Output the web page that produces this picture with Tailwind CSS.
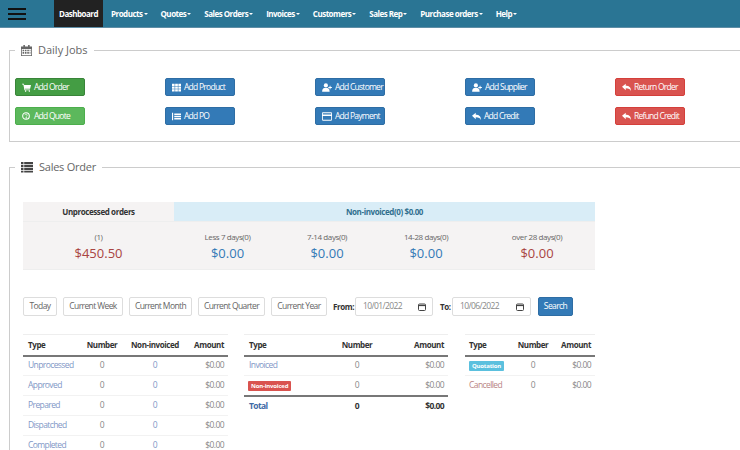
<!DOCTYPE html>
<html lang="en">
<head>
  <meta charset="UTF-8" />
  <title>Dashboard</title>
  <script src="https://cdn.jsdelivr.net/npm/@tailwindcss/browser@4"></script>
</head>
<body class="bg-white font-['Open_Sans',sans-serif] text-[8px] tracking-[-0.4px] text-[#555] w-[740px] h-[450px] overflow-hidden">
  <!-- Navbar -->
  <nav class="h-[28px] bg-[#2a7594] border-b border-[#5f8ea6] flex items-stretch text-white font-bold text-[8px] tracking-[-0.5px]">
    <div class="w-[54px] flex items-center pl-[8px]">
      <div class="w-[18px] flex flex-col gap-[3px]">
        <div class="h-[2px] bg-[#111]"></div>
        <div class="h-[2px] bg-[#111]"></div>
        <div class="h-[2px] bg-[#111]"></div>
      </div>
    </div>
    <a class="w-[49px] bg-[#222] flex items-center justify-center">Dashboard</a>
    <a class="ml-[8px] flex items-center">Products<span class="ml-[1px] border-x-[2px] border-t-[2px] border-x-transparent border-t-white"></span></a>
    <a class="ml-[13px] flex items-center">Quotes<span class="ml-[1px] border-x-[2px] border-t-[2px] border-x-transparent border-t-white"></span></a>
    <a class="ml-[13px] flex items-center">Sales Orders<span class="ml-[1px] border-x-[2px] border-t-[2px] border-x-transparent border-t-white"></span></a>
    <a class="ml-[13px] flex items-center">Invoices<span class="ml-[1px] border-x-[2px] border-t-[2px] border-x-transparent border-t-white"></span></a>
    <a class="ml-[13px] flex items-center">Customers<span class="ml-[1px] border-x-[2px] border-t-[2px] border-x-transparent border-t-white"></span></a>
    <a class="ml-[13px] flex items-center">Sales Rep<span class="ml-[1px] border-x-[2px] border-t-[2px] border-x-transparent border-t-white"></span></a>
    <a class="ml-[13px] flex items-center">Purchase orders<span class="ml-[1px] border-x-[2px] border-t-[2px] border-x-transparent border-t-white"></span></a>
    <a class="ml-[13px] flex items-center">Help<span class="ml-[1px] border-x-[2px] border-t-[2px] border-x-transparent border-t-white"></span></a>
  </nav>

  <!-- Daily Jobs -->
  <fieldset class="ml-[9px] mt-[13px] w-[731px] h-[101px] border border-r-0 border-[#ccc] pl-[5px]">
    <legend class="px-[6px] text-[11px] tracking-normal leading-[18px] text-[#666] flex items-center gap-[6px]">
      <svg class="w-[11px] h-[11px]" viewBox="0 0 14 14" fill="#666"><path d="M3 0h2v2h4V0h2v2h3v12H0V2h3zM1 5v8h12V5zm1 1h2v2H2zm3 0h2v2H5zm3 0h2v2H8zm3 0h1v2h-1zM2 9h2v2H2zm3 0h2v2H5zm3 0h2v2H8zm3 0h1v2h-1z"/></svg>
      Daily Jobs
    </legend>
    <div class="grid grid-cols-[150px_150px_150px_150px_100px] gap-y-[11px] mt-[19px] text-white text-[8.5px] whitespace-nowrap tracking-[-0.75px]">
      <a class="w-[70px] h-[18px] rounded-[2px] bg-[#449d44] border border-[#398439] flex items-center pl-[6px] gap-[3px]">
        <svg class="w-[9px] h-[9px]" viewBox="0 0 12 12" fill="#fff"><path d="M0 1h2.500l.4 1.500H12l-1.200 5H4l.2 1h6.300v1H3.300L1.800 2H0zM4 10h1.600v1.600H4zm5 0h1.600v1.600H9z"/></svg>Add Order</a>
      <a class="w-[70px] h-[18px] rounded-[2px] bg-[#337ab7] border border-[#2e6da4] flex items-center pl-[6px] gap-[3px]">
        <svg class="w-[9px] h-[9px]" viewBox="0 0 12 12" fill="#fff"><path d="M0 1h3.500v3H0zm4.200 0h3.600v3H4.200zm4.300 0H12v3H8.500zM0 4.600h3.500v3H0zm4.200 0h3.600v3H4.200zm4.300 0H12v3H8.500zM0 8.200h3.500v3H0zm4.200 0h3.600v3H4.200zm4.300 0H12v3H8.500z"/></svg>Add Product</a>
      <a class="w-[70px] h-[18px] rounded-[2px] bg-[#337ab7] border border-[#2e6da4] flex items-center pl-[6px] gap-[3px]">
        <svg class="w-[10px] h-[9px]" viewBox="0 0 13 12" fill="#fff"><circle cx="5" cy="3.200" r="2.800"/><path d="M0 11.500c0-3.500 1.500-5 3-5h4c1.500 0 3 1.500 3 5zM10 3.500h1.200v1.800H13v1.200h-1.800v1.800H10V6.500H8.200V5.300H10z"/></svg>Add Customer</a>
      <a class="w-[70px] h-[18px] rounded-[2px] bg-[#337ab7] border border-[#2e6da4] flex items-center pl-[6px] gap-[3px]">
        <svg class="w-[10px] h-[9px]" viewBox="0 0 13 12" fill="#fff"><circle cx="5" cy="3.200" r="2.800"/><path d="M0 11.500c0-3.500 1.500-5 3-5h4c1.500 0 3 1.500 3 5zM10 3.500h1.200v1.800H13v1.200h-1.800v1.800H10V6.500H8.200V5.300H10z"/></svg>Add Supplier</a>
      <a class="w-[70px] h-[18px] rounded-[2px] bg-[#d9534f] border border-[#d43f3a] flex items-center pl-[6px] gap-[3px]">
        <svg class="w-[9px] h-[9px]" viewBox="0 0 12 12" fill="#fff"><path d="M5 1v2.500c4 0 7 1.500 7 7.500-1-3-3-4-7-4v2.500L0 5z"/></svg>Return Order</a>

      <a class="w-[70px] h-[18px] rounded-[2px] bg-[#5cb85c] border border-[#4cae4c] flex items-center pl-[6px] gap-[4px]">
        <svg class="w-[8px] h-[8px]" viewBox="0 0 12 12"><circle cx="6" cy="6" r="5" fill="none" stroke="#fff" stroke-width="1.600"/><path d="M4.300 4.800c0-2.200 3.500-2.200 3.500 0 0 1.300-1.400 1.300-1.400 2.200M5.800 8.200h1.200v1.200H5.800z" fill="none" stroke="#fff"/></svg>Add Quote</a>
      <a class="w-[70px] h-[18px] rounded-[2px] bg-[#337ab7] border border-[#2e6da4] flex items-center pl-[6px] gap-[3px]">
        <svg class="w-[9px] h-[9px]" viewBox="0 0 12 12" fill="#fff"><path d="M0 1h1.500v10H0zm3 1h9v2H3zm0 3h9v2H3zm0 3h9v2H3z"/></svg>Add PO</a>
      <a class="w-[70px] h-[18px] rounded-[2px] bg-[#337ab7] border border-[#2e6da4] flex items-center pl-[6px] gap-[3px]">
        <svg class="w-[10px] h-[9px]" viewBox="0 0 12 10" fill="#fff"><path d="M1 0h10a1 1 0 0 1 1 1v8a1 1 0 0 1-1 1H1a1 1 0 0 1-1-1V1a1 1 0 0 1 1-1zm0 1v1.500h10V1zm0 3.500V9h10V4.500z"/></svg>Add Payment</a>
      <a class="w-[70px] h-[18px] rounded-[2px] bg-[#337ab7] border border-[#2e6da4] flex items-center pl-[6px] gap-[3px]">
        <svg class="w-[9px] h-[9px]" viewBox="0 0 12 12" fill="#fff"><path d="M5 1v2.500c4 0 7 1.500 7 7.500-1-3-3-4-7-4v2.500L0 5z"/></svg>Add Credit</a>
      <a class="w-[70px] h-[18px] rounded-[2px] bg-[#d9534f] border border-[#d43f3a] flex items-center pl-[6px] gap-[3px]">
        <svg class="w-[9px] h-[9px]" viewBox="0 0 12 12" fill="#fff"><path d="M5 1v2.500c4 0 7 1.500 7 7.500-1-3-3-4-7-4v2.500L0 5z"/></svg>Refund Credit</a>
    </div>
  </fieldset>

  <!-- Sales Order -->
  <fieldset class="ml-[9px] mt-[16px] w-[731px] h-[300px] border border-r-0 border-b-0 border-[#ccc] pl-[13px]">
    <legend class="ml-[-8px] px-[6px] text-[11px] tracking-[-0.25px] leading-[18px] text-[#666] flex items-center gap-[6px]">
      <svg class="w-[12px] h-[12px]" viewBox="0 0 12 12" fill="#444"><path d="M0 1h2.500v2.200H0zm3.200 0H12v2.200H3.200zM0 3.900h2.500v2.200H0zm3.200 0H12v2.200H3.200zM0 6.800h2.500V9H0zm3.200 0H12V9H3.200zM0 9.700h2.500v1.800H0zm3.200 0H12v1.800H3.200z"/></svg>
      Sales Order
    </legend>

    <!-- Summary panel -->
    <div class="w-[572px] h-[68px] mt-[26px] bg-[#f5f3f3] border-b border-[#eee]">
      <div class="flex h-[20px] items-center font-bold border-b border-[#eee]">
        <div class="w-[151px] text-center text-[#333]">Unprocessed orders</div>
        <div class="flex-1 h-full flex items-center justify-center bg-[#d9edf7] text-[#31708f]">Non-invoiced(0) $0.00</div>
      </div>
      <div class="grid grid-cols-[151px_107px_92px_106px_116px] text-center pt-[9px] text-[#666]">
        <div>(1)<div class="text-[13px] tracking-normal leading-[20px] text-[#a94442]">$450.50</div></div>
        <div>Less 7 days(0)<div class="text-[13px] tracking-normal leading-[20px] text-[#337ab7]">$0.00</div></div>
        <div>7-14 days(0)<div class="text-[13px] tracking-normal leading-[20px] text-[#337ab7]">$0.00</div></div>
        <div>14-28 days(0)<div class="text-[13px] tracking-normal leading-[20px] text-[#337ab7]">$0.00</div></div>
        <div>over 28 days(0)<div class="text-[13px] tracking-normal leading-[20px] text-[#a94442]">$0.00</div></div>
      </div>
    </div>

    <!-- Date filter -->
    <div class="flex items-center mt-[27px] h-[19px] text-[#666] text-[8.5px] tracking-[-0.6px] whitespace-nowrap">
      <a class="w-[34px] h-full border border-[#ddd] rounded-[2px] flex items-center justify-center">Today</a>
      <a class="ml-[6px] w-[60px] h-full border border-[#ddd] rounded-[2px] flex items-center justify-center">Current Week</a>
      <a class="ml-[6px] w-[63px] h-full border border-[#ddd] rounded-[2px] flex items-center justify-center">Current Month</a>
      <a class="ml-[6px] w-[67px] h-full border border-[#ddd] rounded-[2px] flex items-center justify-center">Current Quarter</a>
      <a class="ml-[6px] w-[56px] h-full border border-[#ddd] rounded-[2px] flex items-center justify-center">Current Year</a>
      <b class="ml-[6px] w-[22px] text-[8px] tracking-[-0.4px] text-[#333]">From:</b>
      <div class="w-[78px] h-full border border-[#ddd] rounded-[2px] flex items-center justify-between pl-[7px] pr-[6px] text-[#888]">10/01/2022
        <svg class="w-[8px] h-[8px]" viewBox="0 0 8 8" fill="none" stroke="#444"><rect x=".5" y="1" width="7" height="6.500" rx="1"/><path d="M.5 2.500h7" stroke-width="1.200"/></svg>
      </div>
      <b class="ml-[7px] w-[12px] text-[8px] tracking-[-0.4px] text-[#333]">To:</b>
      <div class="w-[79px] h-full border border-[#ddd] rounded-[2px] flex items-center justify-between pl-[7px] pr-[6px] text-[#888]">10/06/2022
        <svg class="w-[8px] h-[8px]" viewBox="0 0 8 8" fill="none" stroke="#444"><rect x=".5" y="1" width="7" height="6.500" rx="1"/><path d="M.5 2.500h7" stroke-width="1.200"/></svg>
      </div>
      <a class="ml-[7px] w-[35px] h-full bg-[#337ab7] border border-[#2e6da4] rounded-[2px] text-white flex items-center justify-center">Search</a>
    </div>

    <!-- Tables -->
    <div class="flex items-start mt-[18px] text-[#888] text-[8.5px] tracking-[-0.6px] whitespace-nowrap">
      <table class="w-[205px] border-t border-[#eee] table-fixed">
        <thead class="font-bold text-[#333] text-[8px] tracking-[-0.4px]">
          <tr class="h-[21px] border-b-2 border-[#777]">
            <td class="w-[58px] pl-[5px]">Type</td><td class="w-[42px] text-center">Number</td><td class="w-[64px] text-center">Non-invoiced</td><td class="text-right pr-[4px]">Amount</td>
          </tr>
        </thead>
        <tbody>
          <tr class="h-[20px] border-b border-[#f2f2f2]"><td class="pl-[5px] text-[#7f97c6]">Unprocessed</td><td class="text-center">0</td><td class="text-center text-[#7f97c6]">0</td><td class="text-right pr-[4px]">$0.00</td></tr>
          <tr class="h-[20px] border-b border-[#f2f2f2]"><td class="pl-[5px] text-[#7f97c6]">Approved</td><td class="text-center">0</td><td class="text-center text-[#7f97c6]">0</td><td class="text-right pr-[4px]">$0.00</td></tr>
          <tr class="h-[20px] border-b border-[#f2f2f2]"><td class="pl-[5px] text-[#7f97c6]">Prepared</td><td class="text-center">0</td><td class="text-center text-[#7f97c6]">0</td><td class="text-right pr-[4px]">$0.00</td></tr>
          <tr class="h-[20px] border-b border-[#f2f2f2]"><td class="pl-[5px] text-[#7f97c6]">Dispatched</td><td class="text-center">0</td><td class="text-center text-[#7f97c6]">0</td><td class="text-right pr-[4px]">$0.00</td></tr>
          <tr class="h-[20px]"><td class="pl-[5px] text-[#7f97c6]">Completed</td><td class="text-center">0</td><td class="text-center text-[#7f97c6]">0</td><td class="text-right pr-[4px]">$0.00</td></tr>
        </tbody>
      </table>

      <table class="ml-[16px] w-[204px] border-t border-[#eee] table-fixed">
        <thead class="font-bold text-[#333] text-[8px] tracking-[-0.4px]">
          <tr class="h-[21px] border-b-2 border-[#777]">
            <td class="pl-[5px]">Type</td><td class="w-[68px] text-center">Number</td><td class="w-[57px] text-right pr-[4px]">Amount</td>
          </tr>
        </thead>
        <tbody>
          <tr class="h-[20px] border-b border-[#f2f2f2]"><td class="pl-[5px] text-[#7f97c6]">Invoiced</td><td class="text-center">0</td><td class="text-right pr-[4px]">$0.00</td></tr>
          <tr class="h-[20px] border-b-2 border-[#777]"><td class="pl-[4px]"><span class="inline-block bg-[#d9534f] text-white font-bold text-[6px] tracking-[-0.2px] leading-[10px] px-[3px] rounded-[1px]">Non-invoiced</span></td><td class="text-center">0</td><td class="text-right pr-[4px]">$0.00</td></tr>
          <tr class="h-[20px] font-bold text-[#333]"><td class="pl-[5px] text-[#3f6aa5]">Total</td><td class="text-center">0</td><td class="text-right pr-[4px]">$0.00</td></tr>
        </tbody>
      </table>

      <table class="ml-[17px] w-[130px] border-t border-[#eee] table-fixed">
        <thead class="font-bold text-[#333] text-[8px] tracking-[-0.4px]">
          <tr class="h-[21px] border-b-2 border-[#777]">
            <td class="w-[48px] pl-[4px]">Type</td><td class="w-[40px] text-center">Number</td><td class="text-right pr-[4px]">Amount</td>
          </tr>
        </thead>
        <tbody>
          <tr class="h-[20px] border-b border-[#f2f2f2]"><td class="pl-[4px]"><span class="inline-block bg-[#5bc0de] text-white font-bold text-[6px] tracking-[-0.2px] leading-[10px] px-[3px] rounded-[1px]">Quotation</span></td><td class="text-center">0</td><td class="text-right pr-[4px]">$0.00</td></tr>
          <tr class="h-[20px]"><td class="pl-[4px] text-[#b98585]">Cancelled</td><td class="text-center">0</td><td class="text-right pr-[4px]">$0.00</td></tr>
        </tbody>
      </table>
    </div>
  </fieldset>
</body>
</html>
